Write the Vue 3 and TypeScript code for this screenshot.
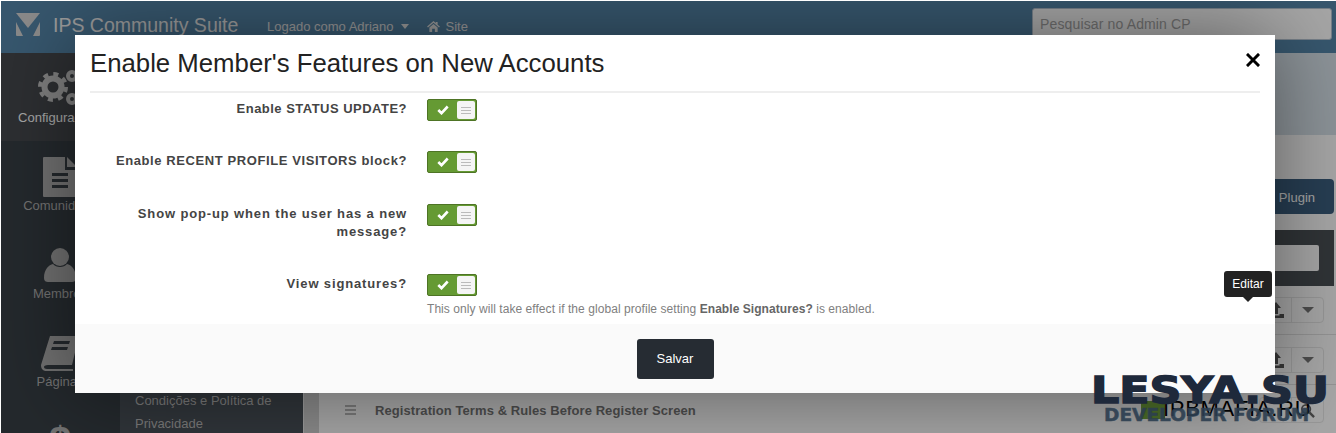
<script setup lang="ts">
interface Field {
  label: string;
  size: string;
}

const fields: Field[] = [
  { label: "Enable STATUS UPDATE?", size: "short" },
  { label: "Enable RECENT PROFILE VISITORS block?", size: "normal" },
  { label: "Show pop-up when the user has a new message?", size: "tall" },
];
</script>

<template>
  <div class="page">
    <header class="topbar">
      <svg class="logo" viewBox="0 0 24 23" width="24" height="23">
        <path d="M0 0h24L12 15z" fill="#d4d4d4" />
        <path d="M0 9l7 14H1a1 1 0 0 1-1-1zM24 9l-7 14h6a1 1 0 0 0 1-1z" fill="#d4d4d4" />
      </svg>
      <span class="brand">IPS Community Suite</span>
      <span class="top-link">Logado como Adriano <i class="caret"></i></span>
      <span class="top-link site">
        <svg viewBox="0 0 14 12" width="13" height="11"><path d="M7 0L0 6l1 1 6-5 6 5 1-1-2.500-2V1h-2v1.200zM2.500 7.200V12h3V8.500h3V12h3V7.200L7 3.300z" fill="#e8e8e8" /></svg>
        Site
      </span>
      <div class="search">Pesquisar no Admin CP</div>
    </header>

    <div class="main">
      <nav class="rail">
        <div class="rail-item active">
          <div class="rail-icon">
            <svg viewBox="0 0 44 38" width="44" height="38">
              <g fill="none" stroke="#c4c4c4">
                <circle cx="15" cy="17" r="8.500" stroke-width="6" />
                <circle cx="15" cy="17" r="13" stroke-width="4" stroke-dasharray="5 5.200" />
                <circle cx="34" cy="6" r="4" stroke-width="4" />
                <circle cx="34" cy="29" r="4" stroke-width="4" />
              </g>
            </svg>
          </div>
          <span>Configurações</span>
        </div>
        <div class="rail-item">
          <div class="rail-icon">
            <svg viewBox="0 0 34 40" width="34" height="40">
              <path d="M1 0h21v13h12v26a1 1 0 0 1-1 1H1a1 1 0 0 1-1-1V1a1 1 0 0 1 1-1z" fill="#aeaeae" />
              <path d="M24 0l10 10H24z" fill="#aeaeae" />
              <path d="M9 16h16v3H9zM9 22h16v3H9zM9 28h16v3H9z" fill="#383f45" />
            </svg>
          </div>
          <span>Comunidade</span>
        </div>
        <div class="rail-item">
          <div class="rail-icon">
            <svg viewBox="0 0 32 34" width="32" height="34">
              <circle cx="16" cy="9" r="9" fill="#aeaeae" />
              <path d="M0 30C0 21 5 17 9 16 12 20 20 20 23 16 27 17 32 21 32 30 32 33 30 34 28 34H4C2 34 0 33 0 30z" fill="#aeaeae" />
            </svg>
          </div>
          <span>Membros</span>
        </div>
        <div class="rail-item">
          <div class="rail-icon">
            <svg viewBox="0 0 38 35" width="38" height="35">
              <path d="M9 0h29l-7 29H7c-3 0-4 1-4 2s1 2 3 2h26v2H6c-4 0-6-2-6-6z" fill="#aeaeae" />
              <path d="M13 5h16l-1 3H12zM11 11h16l-1 3H10z" fill="#383f45" />
            </svg>
          </div>
          <span>Páginas</span>
        </div>
        <div class="rail-item">
          <div class="rail-icon"><span class="money">$</span></div>
        </div>
      </nav>

      <aside class="subnav">
        <div class="subnav-spacer"></div>
        <p>Condições e Política de<br />Privacidade</p>
      </aside>
      <div class="gutter"></div>

      <section class="content">
        <div class="title-band"></div>
        <div class="toolbar">
          <span class="add-btn"><i class="dot"></i>Plugin</span>
        </div>
        <div class="filter"><div class="filter-input"></div></div>
        <div class="row">
          <span class="row-actions">
            <span class="cell">
              <svg viewBox="0 0 16 16" width="16" height="16"><path d="M8 0l5 6h-3v6H6V6H3zM0 12h4.500v1.500h7V12H16v4H0z" fill="#555" /></svg>
            </span>
            <span class="cell"><i class="caret dark"></i></span>
          </span>
        </div>
        <div class="row">
          <span class="row-actions">
            <span class="cell">
              <svg viewBox="0 0 16 16" width="16" height="16"><path d="M8 0l5 6h-3v6H6V6H3zM0 12h4.500v1.500h7V12H16v4H0z" fill="#555" /></svg>
            </span>
            <span class="cell"><i class="caret dark"></i></span>
          </span>
        </div>
        <div class="row last">
          <span class="grip"></span>
          <strong>Registration Terms &amp; Rules Before Register Screen</strong>
          <span class="green"></span>
          <span class="row-actions">
            <span class="cell"></span>
            <span class="cell">
              <svg viewBox="0 0 16 16" width="15" height="15"><circle cx="6.500" cy="6.500" r="4.500" fill="none" stroke="#666" stroke-width="2" /><path d="M10 10l5 5" stroke="#666" stroke-width="2.500" /></svg>
            </span>
          </span>
        </div>
      </section>
    </div>

    <div class="dim"></div>

    <div class="modal">
      <div class="modal-head">
        <h1>Enable Member's Features on New Accounts</h1>
        <svg class="close" viewBox="0 0 14 14" width="14" height="14"><path d="M2 2l10 10M12 2L2 12" stroke="#000" stroke-width="3" stroke-linecap="square" fill="none" /></svg>
      </div>
      <div class="form">
        <div v-for="f in fields" :key="f.label" class="field" :class="f.size">
          <label>{{ f.label }}</label>
          <div class="toggle">
            <svg viewBox="0 0 12 10" width="12" height="10"><path d="M1.300 5l3.200 3.200 6.200-6.700" stroke="#fff" stroke-width="2.600" fill="none" /></svg>
            <span class="knob"><i></i><i></i><i></i></span>
          </div>
        </div>
        <div class="field signatures">
          <label>View signatures?</label>
          <div>
            <div class="toggle">
              <svg viewBox="0 0 12 10" width="12" height="10"><path d="M1.300 5l3.200 3.200 6.200-6.700" stroke="#fff" stroke-width="2.600" fill="none" /></svg>
              <span class="knob"><i></i><i></i><i></i></span>
            </div>
            <p class="hint">This only will take effect if the global profile setting <b>Enable Signatures?</b> is enabled.</p>
          </div>
        </div>
      </div>
      <div class="modal-foot">
        <button class="save">Salvar</button>
      </div>
    </div>

    <div class="tooltip">Editar</div>

    <div class="watermark">
      <span class="wm-back">IPBMAFIA.RU</span>
      <span class="wm-big">LESYA.SU</span>
      <span class="wm-small">DEVELOPER FORUM</span>
    </div>
  </div>
</template>

<style>
html,
body {
  margin: 0;
  overflow: hidden;
}
</style>

<style scoped>
.page {
  position: relative;
  width: 1336px;
  height: 433px;
  overflow: hidden;
  font-family: "Liberation Sans", Arial, sans-serif;
  background: #fff;
}
.page::after {
  content: "";
  position: absolute;
  inset: 0;
  border-top: 1px solid #fff;
  border-left: 1px solid #fff;
  pointer-events: none;
}

.topbar {
  display: flex;
  align-items: center;
  height: 53px;
  padding: 0 4px 5px 16px;
  box-sizing: border-box;
  background: #5586aa;
}
.logo {
  margin: 1px 13px 0 0;
}
.brand {
  font-size: 19.500px;
  width: 214px;
  margin-top: 2px;
  color: #f0f0f0;
}
.top-link {
  font-size: 13px;
  color: #e8e8e8;
  margin: 5px 18px 0 0;
  display: inline-flex;
  align-items: center;
  gap: 5px;
}
.caret {
  display: inline-block;
  width: 0;
  height: 0;
  margin-left: 3px;
  border-left: 4.500px solid transparent;
  border-right: 4.500px solid transparent;
  border-top: 5px solid #e8e8e8;
}
.caret.dark {
  margin: 0;
  border-left-width: 6.500px;
  border-right-width: 6.500px;
  border-top: 6px solid #777;
}
.search {
  margin-left: auto;
  width: 300px;
  height: 32px;
  box-sizing: border-box;
  padding: 7px;
  font-size: 14px;
  letter-spacing: 0.14px;
  color: #aaa;
  background: #fff;
  border: 1px solid #b5c4d2;
  border-radius: 3px;
}

.main {
  display: flex;
  height: 380px;
}
.rail {
  width: 120px;
  flex: none;
  background: #383f45;
}
.rail-item {
  height: 88px;
  padding-top: 15px;
  box-sizing: border-box;
  color: #b0b0b0;
  font-size: 13px;
  line-height: 15px;
  display: flex;
  flex-direction: column;
  align-items: center;
  white-space: nowrap;
}
.rail-item.active {
  background: #45494e;
  color: #fff;
}
.rail-icon {
  height: 42px;
  display: flex;
  align-items: center;
  justify-content: center;
}
.money {
  font-size: 40px;
  line-height: 42px;
  font-weight: bold;
  color: #aeaeae;
}
.subnav {
  width: 183px;
  flex: none;
  background: #4a5259;
}
.subnav-spacer {
  height: 336px;
}
.subnav p {
  margin: 0;
  padding-left: 15px;
  font-size: 13px;
  line-height: 23px;
  color: #bbb;
}
.gutter {
  width: 16px;
  flex: none;
  box-sizing: border-box;
  background: #d4d4d4;
  border-left: 1px solid #eee;
}
.content {
  flex: 1;
  display: flex;
  flex-direction: column;
  background: #fff;
}
.title-band {
  height: 82px;
  flex: none;
  background: #d8e2ea;
}
.toolbar {
  height: 95px;
  flex: none;
  box-sizing: border-box;
  padding: 44px 2px 16px 0;
  display: flex;
  justify-content: flex-end;
}
.add-btn {
  width: 120px;
  border-radius: 4px;
  background: #3d6080;
  color: #fff;
  font-size: 13px;
  line-height: 35px;
  display: flex;
  justify-content: flex-end;
  align-items: center;
  padding: 2px 19px 0 0;
  box-sizing: border-box;
}
.dot {
  width: 6px;
  height: 6px;
  margin-right: 4px;
  border-radius: 50%;
  background: #d09a60;
}
.filter {
  height: 56px;
  flex: none;
  margin-right: 2px;
  background: #4a5055;
  display: flex;
  justify-content: flex-end;
  align-items: center;
  padding-right: 15px;
}
.filter-input {
  width: 100px;
  height: 26px;
  background: #fff;
  border-radius: 2px;
}
.row {
  height: 50px;
  flex: none;
  display: flex;
  align-items: center;
  justify-content: flex-end;
  padding-right: 12px;
  border-bottom: 1px solid #e2e2e2;
  box-sizing: border-box;
}
.row:nth-of-type(4) {
  height: 49px;
}
.row-actions {
  display: flex;
  height: 26px;
  box-sizing: border-box;
  border: 1px solid #e8e8e8;
  border-radius: 4px;
}
.cell {
  width: 31px;
  display: flex;
  align-items: center;
  justify-content: center;
}
.cell + .cell {
  border-left: 1px solid #e8e8e8;
}
.row.last {
  justify-content: flex-start;
  padding-left: 26px;
  font-size: 13px;
  letter-spacing: 0.08px;
  color: #777;
  border: 0;
}
.grip {
  width: 11px;
  height: 10px;
  box-sizing: border-box;
  margin-right: 19px;
  border-top: 2px solid #bbb;
  border-bottom: 2px solid #bbb;
  background: linear-gradient(#bbb, #bbb) center / 100% 2px no-repeat;
}
.green {
  width: 24px;
  height: 18px;
  margin-left: auto;
  margin-right: 94px;
  background: #76a840;
}

.dim {
  position: absolute;
  inset: 0;
  background: rgba(0, 0, 0, 0.35);
}

.modal {
  position: absolute;
  left: 75px;
  top: 35px;
  width: 1200px;
  height: 358px;
  background: #fff;
  display: flex;
  flex-direction: column;
  box-shadow: 0 0 80px rgba(0, 0, 0, 0.46);
}
.modal-head {
  height: 58px;
  flex: none;
  margin: 0 15px;
  box-sizing: border-box;
  border-bottom: 2px solid #eee;
  display: flex;
  align-items: center;
  justify-content: space-between;
}
.modal-head h1 {
  margin: 0;
  font-size: 25.750px;
  font-weight: 400;
  color: #222;
}
.close {
  margin-bottom: 7px;
}
.form {
  flex: 1;
  padding-top: 6px;
}
.field {
  display: flex;
  height: 53px;
}
.field label {
  width: 332px;
  text-align: right;
  font-size: 13px;
  font-weight: bold;
  line-height: 18px;
  color: #444;
  margin-right: 20px;
  box-sizing: border-box;
  padding: 1px 0 0 20px;
}
.field.short {
  height: 52px;
}
.field.short label {
  letter-spacing: 0.48px;
}
.field.normal label {
  letter-spacing: 0.59px;
}
.field.tall {
  height: 70px;
}
.field.tall label,
.field.signatures label {
  letter-spacing: 0.86px;
}
.field.signatures {
  height: 50px;
}
.toggle {
  width: 50px;
  height: 22px;
  box-sizing: border-box;
  background: #659a33;
  border: 1px solid #4e7425;
  border-radius: 2px;
  display: flex;
  align-items: center;
  justify-content: space-between;
  padding: 1px 1px 1px 9px;
}
.knob {
  width: 18px;
  height: 18px;
  background: #f5f5f5;
  border-radius: 2px;
  display: flex;
  flex-direction: column;
  align-items: center;
  justify-content: center;
  gap: 2px;
}
.knob i {
  display: block;
  width: 10px;
  height: 1px;
  background: #bbb;
}
.hint {
  margin: 6px 0 0;
  font-size: 12px;
  letter-spacing: 0.06px;
  color: #808080;
  white-space: nowrap;
}
.hint b {
  color: #666;
}
.modal-foot {
  height: 69px;
  flex: none;
  background: #fafafa;
  display: flex;
  justify-content: center;
  align-items: center;
}
.save {
  width: 77px;
  height: 40px;
  border: 0;
  border-radius: 3px;
  background: #262c33;
  color: #fff;
  font-family: inherit;
  font-size: 13px;
}

.tooltip {
  position: absolute;
  left: 1224px;
  top: 271px;
  width: 48px;
  height: 26px;
  background: #222;
  color: #fff;
  font-size: 12px;
  line-height: 26px;
  text-align: center;
  border-radius: 3px;
}
.tooltip::after {
  content: "";
  position: absolute;
  left: 19px;
  top: 26px;
  border-left: 5px solid transparent;
  border-right: 5px solid transparent;
  border-top: 5px solid #222;
}

.watermark {
  position: absolute;
  left: 1091px;
  top: 372px;
  width: 240px;
  height: 58px;
}
.wm-back {
  position: absolute;
  left: 72px;
  top: 24px;
  font-size: 22px;
  letter-spacing: 0.7px;
  color: #000;
  white-space: nowrap;
}
.wm-big {
  position: absolute;
  left: 0;
  top: -4px;
  font-family: "DejaVu Sans", sans-serif;
  font-size: 38px;
  font-weight: bold;
  color: #1e293b;
  -webkit-text-stroke: 1.500px #1e293b;
  white-space: nowrap;
  transform: scaleX(1.165);
  transform-origin: left;
}
.wm-small {
  position: absolute;
  left: 13px;
  top: 32px;
  font-family: "DejaVu Sans", sans-serif;
  font-size: 18px;
  font-weight: bold;
  color: #2c3e50;
  -webkit-text-stroke: 0.500px #2c3e50;
  opacity: 0.9;
  white-space: nowrap;
  transform: scaleX(1.03);
  transform-origin: left;
}
</style>
